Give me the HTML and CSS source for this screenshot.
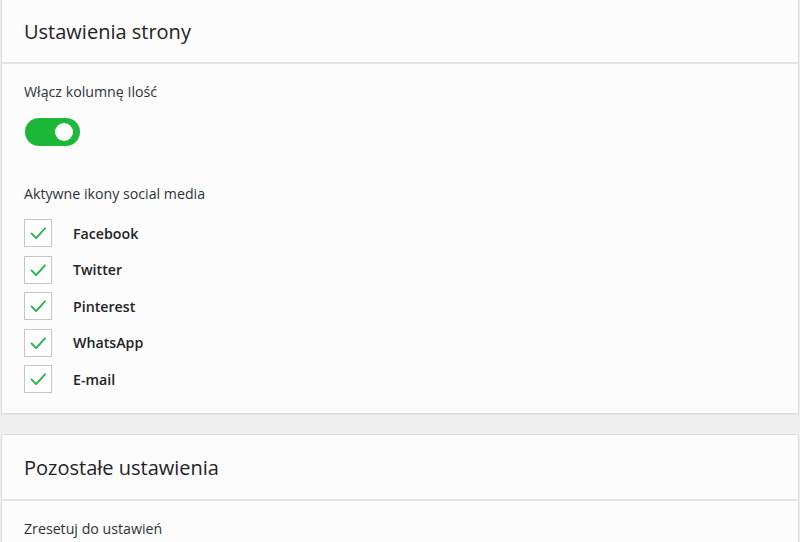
FILE: index.html
```html
<!DOCTYPE html>
<html lang="pl">
<head>
<meta charset="utf-8">
<title>Ustawienia</title>
<link rel="stylesheet" href="styles.css">
</head>
<body>
<div class="page">
  <section class="card card-first">
    <header class="card-header"><h2>Ustawienia strony</h2></header>
    <div class="card-body">
      <div class="field-label">Włącz kolumnę Ilość</div>
      <div class="toggle"><span class="knob"></span></div>
      <div class="field-label social-label">Aktywne ikony social media</div>
      <ul class="checks">
        <li><span class="box"><svg viewBox="0 0 28 28"><path d="M7 14.5 L12 19.5 L21.5 9"/></svg></span><span class="name">Facebook</span></li>
        <li><span class="box"><svg viewBox="0 0 28 28"><path d="M7 14.5 L12 19.5 L21.5 9"/></svg></span><span class="name">Twitter</span></li>
        <li><span class="box"><svg viewBox="0 0 28 28"><path d="M7 14.5 L12 19.5 L21.5 9"/></svg></span><span class="name">Pinterest</span></li>
        <li><span class="box"><svg viewBox="0 0 28 28"><path d="M7 14.5 L12 19.5 L21.5 9"/></svg></span><span class="name">WhatsApp</span></li>
        <li><span class="box"><svg viewBox="0 0 28 28"><path d="M7 14.5 L12 19.5 L21.5 9"/></svg></span><span class="name">E-mail</span></li>
      </ul>
    </div>
  </section>
  <section class="card">
    <header class="card-header"><h2>Pozostałe ustawienia</h2></header>
    <div class="card-body">
      <div class="field-label">Zresetuj do ustawień</div>
    </div>
  </section>
</div>
</body>
</html>
```

FILE: styles.css
```css
html, body {
  margin: 0;
  padding: 0;
}
body {
  background: #efeff0;
  font-family: "Open Sans", "Noto Sans", sans-serif;
  color: #222;
  overflow: hidden;
}
.page {
  padding: 0 1px;
  display: flex;
  flex-direction: column;
  gap: 20px;
}
.card {
  background: #fdfcfd;
  border: 1px solid #dcdcde;
  border-radius: 2px;
  box-shadow: 0 1px 1px rgba(0,0,0,0.04);
}
.card-first {
  border-top: 0;
  border-radius: 0 0 2px 2px;
}
.card-header {
  height: 62px;
  border-bottom: 2px solid #e4e4e6;
  display: flex;
  align-items: center;
  padding: 0 22px;
}
.card:not(.card-first) .card-header {
  height: 64px;
}
.card-header h2 {
  margin: 0;
  font-size: 20px;
  font-weight: 400;
  color: #1d2327;
}
.card-body {
  padding: 17px 22px 20px;
}
.field-label {
  font-size: 14.2px;
  line-height: 22px;
  color: #2c3338;
}
.toggle {
  margin-top: 15px;
  width: 55px;
  height: 28px;
  margin-left: 1px;
  border-radius: 14px;
  background: #1db83a;
  display: flex;
  align-items: center;
  justify-content: flex-end;
  padding-right: 7px;
  box-sizing: border-box;
}
.knob {
  width: 18px;
  height: 18px;
  border-radius: 50%;
  background: #fff;
}
.social-label {
  margin-top: 37px;
}
.checks {
  list-style: none;
  margin: 14px 0 0;
  padding: 0;
  display: flex;
  flex-direction: column;
  gap: 8.5px;
}
.checks li {
  display: flex;
  align-items: center;
  gap: 21px;
  height: 28px;
}
.box {
  width: 26px;
  height: 26px;
  border: 1px solid #c6c6c8;
  background: #fff;
  display: flex;
}
.box svg {
  width: 26px;
  height: 26px;
}
.box path {
  fill: none;
  stroke: #22b447;
  stroke-width: 2;
  stroke-linecap: round;
  stroke-linejoin: round;
}
.name {
  font-size: 14.2px;
  font-weight: 600;
  color: #1d2327;
}
```
